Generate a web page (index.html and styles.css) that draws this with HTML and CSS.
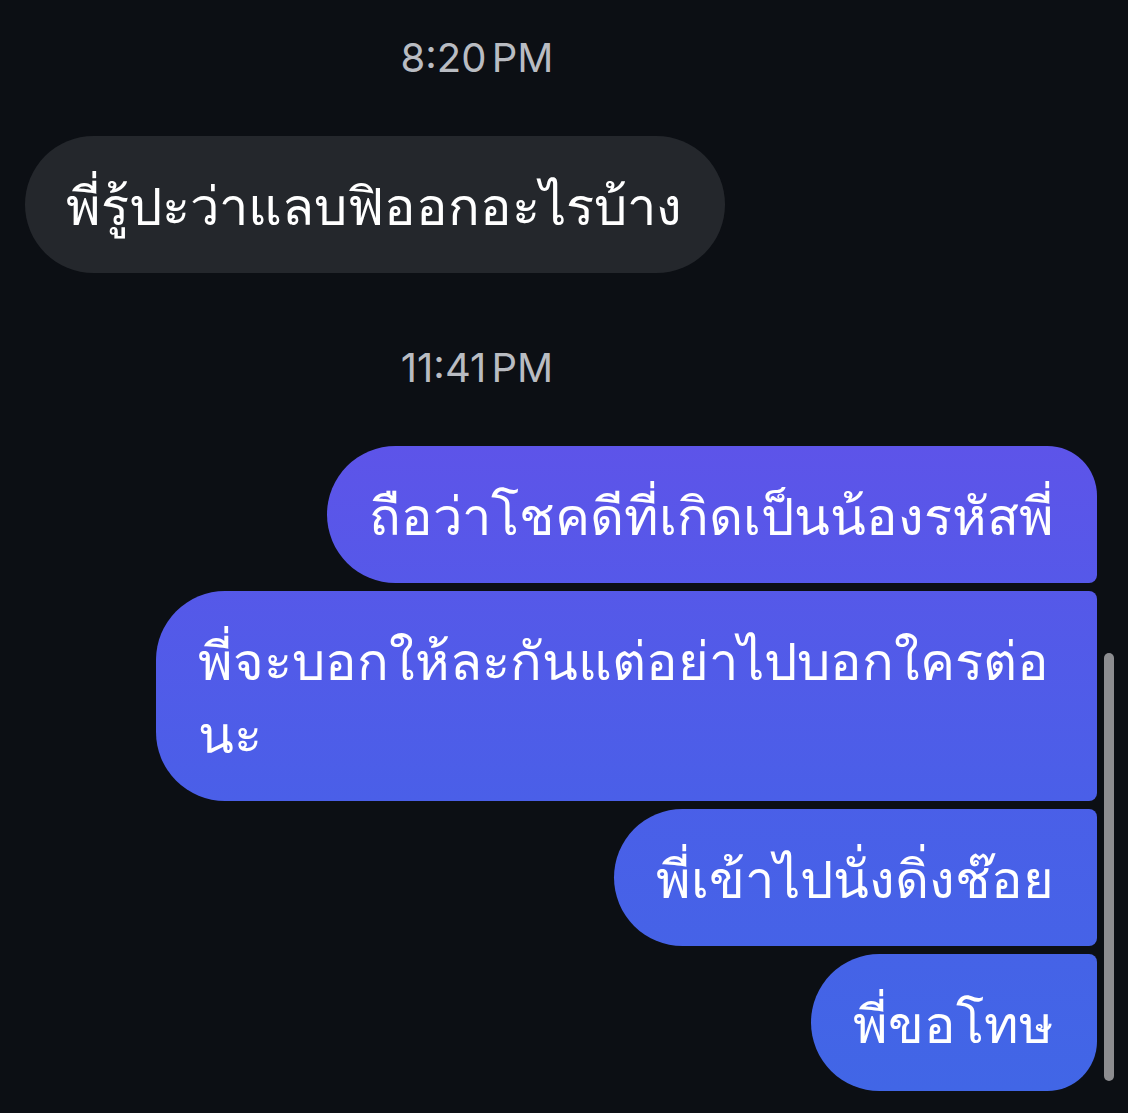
FILE: index.html
```html
<!DOCTYPE html>
<html lang="th">
<head>
  <meta charset="UTF-8">
  <title>แชท</title>
  <link rel="stylesheet" href="styles.css">
</head>
<body>
  <div class="chat">
    <div class="time time-first">8:20 PM</div>
    <div class="row in">
      <div class="bubble incoming">พี่รู้ปะว่าแลบฟิออกอะไรบ้าง</div>
    </div>

    <div class="time">11:41 PM</div>
    <div class="group">
      <div class="row out">
        <div class="bubble outgoing first">ถือว่าโชคดีที่เกิดเป็นน้องรหัสพี่</div>
      </div>
      <div class="row out">
        <div class="bubble outgoing middle">พี่จะบอกให้ละกันแต่อย่าไปบอกใครต่อนะ</div>
      </div>
      <div class="row out">
        <div class="bubble outgoing middle">พี่เข้าไปนั่งดิ่งช๊อย</div>
      </div>
      <div class="row out">
        <div class="bubble outgoing last">พี่ขอโทษ</div>
      </div>
    </div>
  </div>
  <div class="scrollbar"></div>
</body>
</html>
```

FILE: styles.css
```css
body {
  margin: 0;
  background-color: #0c0f14;
  color: white;
  font-family: 'Noto Sans', sans-serif;
  height: 1113px;
  overflow: hidden;
}
.chat {
  padding: 0 31px 0 25px;
}
.time {
  text-align: center;
  font-family: 'Inter', sans-serif;
  font-size: 40px;
  line-height: 60px;
  color: #b9bcc2;
  margin: 65px 0 48px;
  padding-right: 168px;
  word-spacing: -6px;
}
.time-first {
  margin-top: 28px;
}
.row {
  display: flex;
}
.row.out {
  justify-content: flex-end;
  margin-bottom: 8px;
}
.bubble {
  box-sizing: border-box;
  font-size: 52.5px;
  line-height: 73px;
  padding: 32px 43px 32px 42px;
  max-width: 941px;
}
.incoming {
  background-color: #24272c;
  border-radius: 69px;
  padding-left: 41px;
}
.outgoing {
  background-image: linear-gradient(180deg, #5d54e9 446px, #4a5fe8 800px, #4166e6 1090px);
  background-attachment: fixed;
  border-radius: 69px 8px 8px 69px;
}
.outgoing.first {
  border-top-right-radius: 50px;
}
.outgoing.last {
  border-bottom-right-radius: 50px;
}
.scrollbar {
  position: absolute;
  left: 1104px;
  top: 653px;
  width: 10px;
  height: 428px;
  border-radius: 5px;
  background-color: #8d8d90;
}
```
